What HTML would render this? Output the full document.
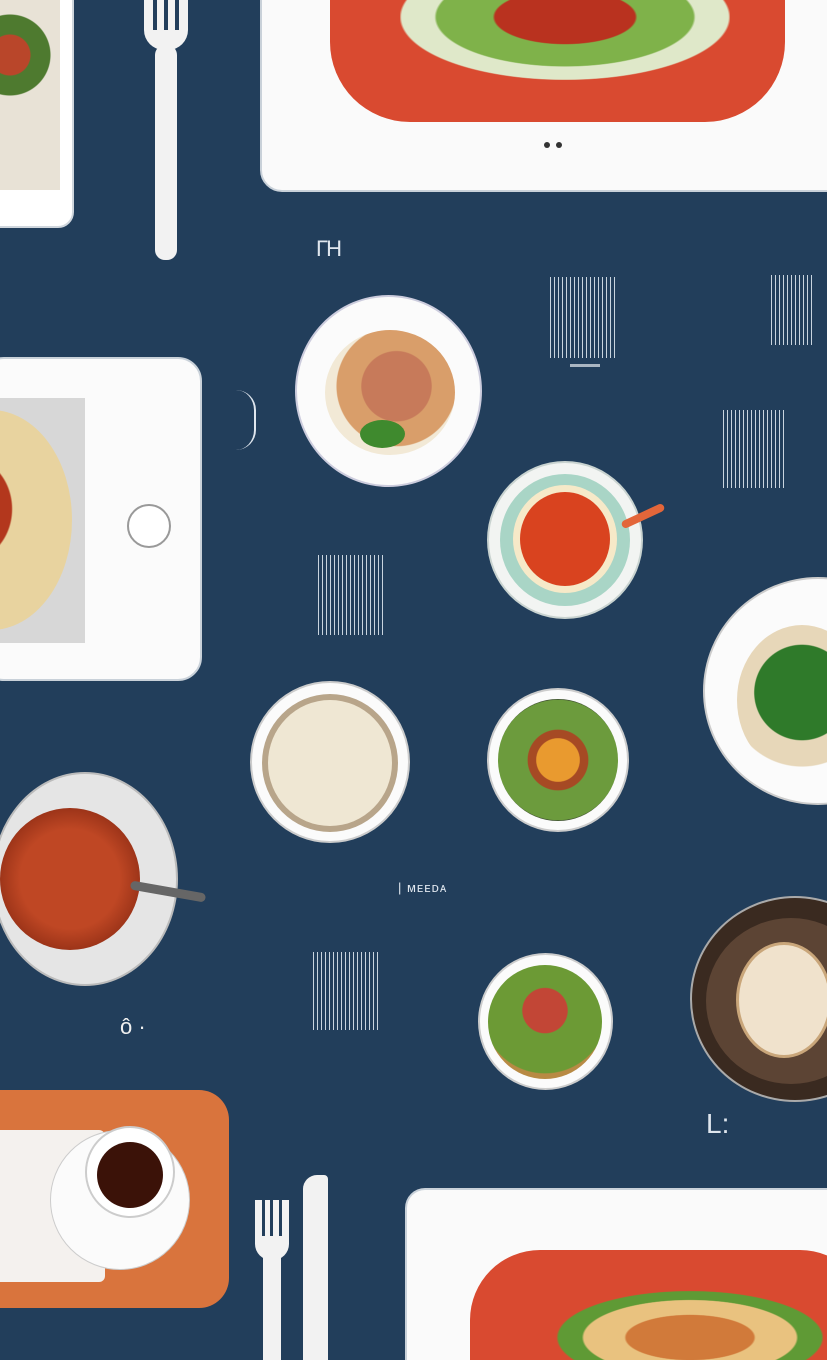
<!DOCTYPE html>
<html style="width:827px;height:1360px;overflow:hidden"><head><meta charset="utf-8"><style>
html,body{margin:0;padding:0}
body{width:827px;height:1360px;position:relative;overflow:hidden;background:#223e5b;font-family:"Liberation Sans",sans-serif}
.a{position:absolute;box-sizing:border-box}
.c{position:absolute;border-radius:50%;box-sizing:border-box}
.bc{position:absolute;background:repeating-linear-gradient(90deg,#c9d4df 0 1px,transparent 1px 4px)}
</style></head><body>

<div class="a" style="left:-20px;top:-20px;width:94px;height:248px;background:#fff;border-radius:16px;border:2px solid #cfd6dd"></div>
<div class="a" style="left:-10px;top:-5px;width:70px;height:195px;background:radial-gradient(circle at 20px 60px,#b9462a 0 20px,#4e7a2f 21px 40px,#e8e2d6 41px)"></div>

<div class="a" style="left:144px;top:0;width:44px;height:50px;border-radius:0 0 20px 20px;background:#f2f2f2"></div>
<div class="a" style="left:155px;top:45px;width:22px;height:215px;border-radius:10px;background:#f2f2f2"></div>
<div class="a" style="left:153px;top:0;width:4px;height:30px;background:#223e5b"></div>
<div class="a" style="left:164px;top:0;width:4px;height:30px;background:#223e5b"></div>
<div class="a" style="left:175px;top:0;width:4px;height:30px;background:#223e5b"></div>

<div class="a" style="left:260px;top:-30px;width:600px;height:222px;background:#fafafa;border-radius:22px;border:2px solid #c9d1d9"></div>
<div class="a" style="left:330px;top:-40px;width:455px;height:162px;background:#d94a30;border-radius:0 0 80px 80px"></div>
<div class="a" style="left:400px;top:-10px;width:330px;height:90px;background:radial-gradient(ellipse at 50% 30%,#b9321f 0 30%,#7fb24a 31% 55%,#dfe8c9 56% 70%,transparent 71%)"></div>
<div class="c" style="left:544px;top:142px;width:6px;height:6px;background:#333"></div>
<div class="c" style="left:556px;top:142px;width:6px;height:6px;background:#333"></div>

<div class="a" style="left:316px;top:236px;color:#dfe6ee;font-size:22px;letter-spacing:-2px">ΓΗ</div>

<div class="bc" style="left:550px;top:277px;width:66px;height:81px"></div>
<div class="a" style="left:570px;top:364px;width:30px;height:3px;background:#aab6c2"></div>
<div class="bc" style="left:771px;top:275px;width:44px;height:70px"></div>
<div class="bc" style="left:723px;top:410px;width:63px;height:78px"></div>
<div class="bc" style="left:318px;top:555px;width:65px;height:80px"></div>
<div class="bc" style="left:313px;top:952px;width:68px;height:78px"></div>
<div class="a" style="left:236px;top:390px;width:20px;height:60px;border-right:2px solid #dfe6ee;border-radius:0 30px 30px 0"></div>

<div class="c" style="left:295px;top:295px;width:187px;height:192px;background:#fbfbfb;border:2px solid #ccd"></div>
<div class="c" style="left:325px;top:330px;width:130px;height:125px;background:radial-gradient(circle at 55% 45%,#c77a5a 0 35%,#d99e6a 36% 60%,#f2e9d6 61%)"></div>
<div class="c" style="left:360px;top:420px;width:45px;height:28px;background:#3f8a2e"></div>

<div class="a" style="left:-20px;top:357px;width:222px;height:324px;background:#fbfbfb;border-radius:24px;border:2px solid #c9d1d9"></div>
<div class="a" style="left:-10px;top:398px;width:95px;height:245px;background:#d7d7d7"></div>
<div class="c" style="left:-90px;top:410px;width:162px;height:220px;background:radial-gradient(ellipse at 35% 45%,#b3371d 0 30%,#e8d39f 31% 80%,#c99b4a 81%)"></div>
<div class="c" style="left:127px;top:504px;width:44px;height:44px;border:2px solid #999;background:#fff"></div>

<div class="c" style="left:487px;top:461px;width:156px;height:158px;background:#f2f4f2;border:2px solid #c9d3d0"></div>
<div class="c" style="left:500px;top:474px;width:130px;height:132px;background:#a9d5c6"></div>
<div class="c" style="left:513px;top:485px;width:104px;height:108px;background:#f6e9c8"></div>
<div class="c" style="left:520px;top:492px;width:90px;height:94px;background:#d9431f"></div>
<div class="a" style="left:620px;top:512px;width:46px;height:8px;background:#e3663a;border-radius:4px;transform:rotate(-25deg)"></div>

<div class="c" style="left:703px;top:577px;width:230px;height:228px;background:#fbfbfb;border:2px solid #ccc"></div>
<div class="c" style="left:737px;top:625px;width:130px;height:150px;background:radial-gradient(circle at 50% 45%,#2f7a2a 0 45%,#e7d7b9 46% 70%,transparent 71%)"></div>

<div class="c" style="left:250px;top:681px;width:160px;height:162px;background:#fbfbfb;border:2px solid #ccc"></div>
<div class="c" style="left:262px;top:694px;width:136px;height:138px;background:#b8a58a"></div>
<div class="c" style="left:268px;top:700px;width:124px;height:126px;background:#efe7d3"></div>

<div class="c" style="left:487px;top:688px;width:142px;height:144px;background:#fbfbfb;border:2px solid #ccc"></div>
<div class="c" style="left:498px;top:699px;width:120px;height:122px;background:radial-gradient(circle,#e99a2f 0 25%,#a64a24 26% 35%,#6c9b3d 36% 70%,#38452e 71%)"></div>

<div class="c" style="left:-8px;top:772px;width:186px;height:214px;background:#e5e5e5;border:2px solid #bbb"></div>
<div class="c" style="left:0;top:808px;width:140px;height:142px;background:radial-gradient(circle at 50% 50%,#bf4724 0 50%,#8e2c14 80%)"></div>
<div class="a" style="left:130px;top:887px;width:76px;height:9px;background:#666;border-radius:5px;transform:rotate(10deg)"></div>

<div class="a" style="left:398px;top:880px;color:#dfe6ee;font-size:13px;letter-spacing:1px">| ᴍᴇᴇᴅᴀ</div>

<div class="c" style="left:478px;top:953px;width:135px;height:137px;background:#fbfbfb;border:2px solid #ccc"></div>
<div class="c" style="left:488px;top:965px;width:114px;height:114px;background:radial-gradient(circle at 50% 40%,#c24636 0 25%,#6c9a35 26% 70%,#b88a44 71%)"></div>

<div class="c" style="left:690px;top:896px;width:210px;height:206px;background:#3a2a20;border:2px solid #aaa"></div>
<div class="c" style="left:706px;top:918px;width:170px;height:166px;background:#5c4434"></div>
<div class="c" style="left:736px;top:942px;width:96px;height:116px;background:#f0e2cc;border:3px solid #c9a67a"></div>

<div class="a" style="left:120px;top:1014px;color:#f0f0f0;font-size:22px">ô ·</div>
<div class="a" style="left:706px;top:1108px;color:#dfe6ee;font-size:28px">L:</div>

<div class="a" style="left:-30px;top:1090px;width:259px;height:218px;background:#d9743d;border-radius:30px"></div>
<div class="a" style="left:-20px;top:1130px;width:125px;height:152px;background:#f4f1ee;border-radius:6px"></div>
<div class="c" style="left:50px;top:1130px;width:140px;height:140px;background:#fbfbfb;border:1px solid #ccc"></div>
<div class="c" style="left:85px;top:1126px;width:90px;height:92px;background:#fff;border:2px solid #ccc"></div>
<div class="c" style="left:97px;top:1142px;width:66px;height:66px;background:#3b1208"></div>

<div class="a" style="left:255px;top:1200px;width:34px;height:60px;border-radius:0 0 16px 16px;background:#f2f2f2"></div>
<div class="a" style="left:263px;top:1240px;width:18px;height:120px;border-radius:8px 8px 0 0;background:#f2f2f2"></div>
<div class="a" style="left:262px;top:1200px;width:3px;height:36px;background:#223e5b"></div>
<div class="a" style="left:270px;top:1200px;width:3px;height:36px;background:#223e5b"></div>
<div class="a" style="left:279px;top:1200px;width:3px;height:36px;background:#223e5b"></div>
<div class="a" style="left:303px;top:1175px;width:25px;height:185px;background:#f2f2f2;border-radius:14px 4px 0 0"></div>

<div class="a" style="left:405px;top:1188px;width:450px;height:172px;background:#fafafa;border-radius:20px 20px 0 0;border:2px solid #c9d1d9;border-bottom:none"></div>
<div class="a" style="left:470px;top:1250px;width:400px;height:110px;background:#d94a30;border-radius:70px 70px 0 0"></div>
<div class="a" style="left:540px;top:1285px;width:300px;height:75px;background:radial-gradient(ellipse at 50% 70%,#d17a3a 0 30%,#e9c27f 31% 50%,#5f9a35 51% 62%,transparent 63%)"></div>

</body></html>
